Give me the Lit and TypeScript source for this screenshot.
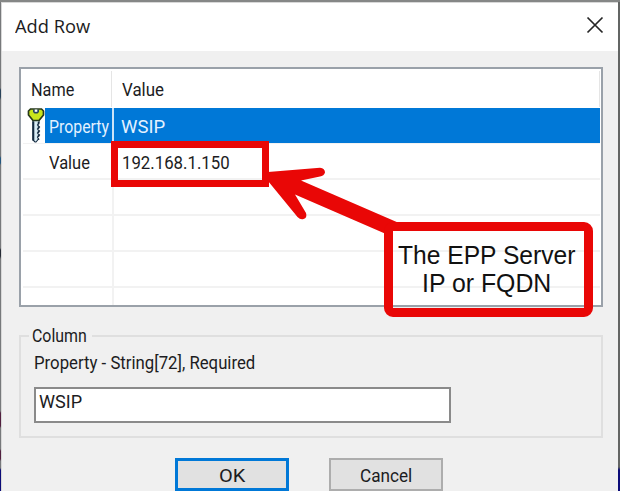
import { LitElement, html, css, svg } from "lit";
import { customElement, property } from "lit/decorators.js";

/** A single line of text condensed or stretched to an exact width. */
@customElement("fit-text")
class FitText extends LitElement {
  @property() text = "";
  @property({ type: Number }) width = 0;

  static styles = css`
    :host { display: block; height: 24px; line-height: 24px; white-space: nowrap; flex: none; }
    .run { display: inline-block; transform-origin: 0 50%; }
  `;

  render() {
    return html`<span class="run">${this.text}</span>`;
  }

  updated() {
    this.style.width = `${this.width}px`;
    const run = this.renderRoot.querySelector<HTMLElement>(".run")!;
    const natural = run.offsetWidth;
    if (natural) run.style.transform = `scaleX(${this.width / natural})`;
  }
}

@customElement("key-icon")
class KeyIcon extends LitElement {
  static styles = css`
    :host { display: block; width: 18px; height: 35px; }
    svg { display: block; }
  `;

  render() {
    return html`<svg width="18" height="35" viewBox="0 0 18 35">
      ${svg`
        <path d="M6 12h6v3l-1.500 2 2 2-2 2 2 2-2 2 2 2-2 2 1 2-2.500 3H8l-2-2Z" fill="#d9edf5" stroke="#142a40" stroke-width="1.100"/>
        <path d="M6.300 13.500v19" stroke="#142a40" stroke-width="2"/>
        <path d="M11.500 14v18" stroke="#142a40" stroke-width="1.500" stroke-dasharray="2.500 1.700"/>
        <path d="M3.500 1h11l2 2v4L12 12.500H6L1.500 7V3Z" fill="#c9e51c" stroke="#27391b" stroke-width="1.700"/>
        <path d="M6 1.500h6v2.500l-1.500 1.500h-3L6 4Z" fill="#27435c"/>
        <path d="M7.700 1.500h2.600v2.300H7.700Z" fill="#fff"/>
      `}
    </svg>`;
  }
}

@customElement("app-root")
class AppRoot extends LitElement {
  static styles = css`
    :host {
      display: block; position: relative; width: 620px; height: 491px; overflow: hidden;
      font: 18.5px/24px Roboto, "Liberation Sans", sans-serif; color: #1c1c22;
    }
    * { box-sizing: border-box; }
    .frame {
      height: 491px; display: grid; grid-template-columns: 1px 617px 2px;
      border-top: 2px solid #858786;
    }
    .edge-left {
      background: linear-gradient(#77797b 27px, #77797b 86px, #29435a 88px, #29435a 95px, #77797b 98px,
        #77797b 154px, #23577f 156px, #23577f 161px, #77797b 163px, #77797b 246px, #252b35 248px,
        #252b35 254px, #77797b 257px, #77797b 409px, #52203f 411px, #52203f 424px, #77797b 426px,
        #77797b 447px, #52203f 449px, #52203f 457px, #77797b 459px, #77797b 466px, #0b0b78 468px);
    }
    .edge-right { background: linear-gradient(#636564 465px, #0b0b78 468px); }
    .window {
      height: 489px; background: #f0f0f0; display: flex; flex-direction: column;
      box-shadow: inset 1px 1px #d8d8d8;
    }
    .titlebar {
      height: 48px; flex: none; background: #fff; display: flex; justify-content: space-between;
      margin: 1px 0 -1px 1px; padding: 11px 14px 0 13px;
      font-family: "Open Sans", sans-serif; font-size: 18.5px;
    }
    .close { display: block; margin-top: 2px; }
    .list {
      margin: 17px 15px 0 18px; height: 240px; flex: none; background: #fff;
      border: 2px solid #9aa1a9; padding: 2px 1px 1px 2px; overflow: hidden;
    }
    .head, .row { display: grid; grid-template-columns: 91px 1fr; }
    .head { height: 37px; }
    .head .cell { padding: 7px 0 0 8px; border-right: 1px solid #e5e5e5; height: 36px; }
    .head .cell:first-child { margin-right: 2px; }
    .row { height: 36px; border-bottom: 2px solid #f2f2f2; }
    .row .name { border-right: 2px solid #f2f2f2; display: flex; }
    .row .value { padding: 7px 0 0 8px; }
    .slot { width: 22px; flex: none; padding-left: 4px; }
    .label { flex: 1; padding: 7px 0 0 4px; }
    .selected { border-bottom-width: 1px; color: #e3f1ff; }
    .selected .label, .selected .value { background: #0078d7; height: 35px; }
    .selected .value { padding-left: 7px; }
    .selected .name { border-right-color: #cce4f7; }
    .group {
      margin: 28px 15px 0 18px; height: 103px; flex: none;
      border: 2px solid #dfdfdf; display: flex; flex-direction: column; align-items: flex-start;
    }
    .legend { margin: -13px 0 0 8px; padding: 0 5px 0 3px; background: #f0f0f0; }
    .desc { margin: 3px 0 0 13px; }
    .input {
      margin: 12px 0 0 13px; width: 417px; height: 36px; background: #fff;
      border: 2px solid #8a8a8a; padding: 1px 0 0 3px;
    }
    .buttons { display: flex; gap: 40px; margin: 20px 0 0 174px; }
    .button {
      width: 114px; height: 33px; background: #e1e1e1; border: 2px solid #adadad;
      display: flex; justify-content: center; padding-top: 4px;
    }
    .primary { border: 3px solid #0078d7; padding-top: 3px; }
    .highlight {
      position: absolute; left: 111px; top: 141px; width: 158px; height: 46px;
      border: 7px solid #e90706;
    }
    .arrow { position: absolute; left: 260px; top: 160px; }
    .callout {
      position: absolute; left: 384px; top: 222px; width: 209px; height: 95px;
      border: 9px solid #e90706; border-radius: 9px; padding: 12px 5px 0 0;
      display: flex; flex-direction: column; align-items: center; gap: 4px;
      font: 26px/24px "Liberation Sans", sans-serif; color: #111;
    }
  `;

  private rows = [
    { name: "Property", nameWidth: 60, value: "WSIP", valueWidth: 44, selected: true },
    { name: "Value", nameWidth: 41, value: "192.168.1.150", valueWidth: 108 },
    {}, {}, {}, {},
  ] as { name?: string; nameWidth?: number; value?: string; valueWidth?: number; selected?: boolean }[];

  private text(text: string, width: number) {
    return html`<fit-text .text=${text} .width=${width}></fit-text>`;
  }

  render() {
    return html`
      <div class="frame">
        <div class="edge-left"></div>
        <div class="window">
          <div class="titlebar">
            ${this.text("Add Row", 75)}
            <svg class="close" width="18" height="18" viewBox="0 0 18 18">
              <path d="M1.500 1.500l15 15M16.500 1.500l-15 15" stroke="#262626" stroke-width="1.700"/>
            </svg>
          </div>
          <div class="list">
            <div class="head">
              <div class="cell">${this.text("Name", 43)}</div>
              <div class="cell">${this.text("Value", 42)}</div>
            </div>
            ${this.rows.map((r) => html`
              <div class="row ${r.selected ? "selected" : ""}">
                <div class="name">
                  <div class="slot">${r.selected ? html`<key-icon></key-icon>` : ""}</div>
                  <div class="label">${r.name ? this.text(r.name, r.nameWidth!) : ""}</div>
                </div>
                <div class="value">${r.value ? this.text(r.value, r.valueWidth!) : ""}</div>
              </div>`)}
          </div>
          <div class="group">
            <div class="legend">${this.text("Column", 55)}</div>
            <div class="desc">${this.text("Property - String[72], Required", 221)}</div>
            <div class="input">${this.text("WSIP", 43)}</div>
          </div>
          <div class="buttons">
            <div class="button primary">${this.text("OK", 26)}</div>
            <div class="button">${this.text("Cancel", 52)}</div>
          </div>
        </div>
        <div class="edge-right"></div>
      </div>
      <div class="highlight"></div>
      <svg class="arrow" width="150" height="80" viewBox="0 0 150 80">
        <path d="M8 12L60 7.700Q65 8.500 65 12.500Q64 16 60 16.500L41 20.500L139 63L126 74L35 34.500L46 53Q47.500 58 43.500 59Q40.500 60 37.500 57L8 21Z" fill="#e90706"/>
      </svg>
      <div class="callout">
        ${this.text("The EPP Server", 177)}
        ${this.text("IP or FQDN", 129)}
      </div>
    `;
  }
}
